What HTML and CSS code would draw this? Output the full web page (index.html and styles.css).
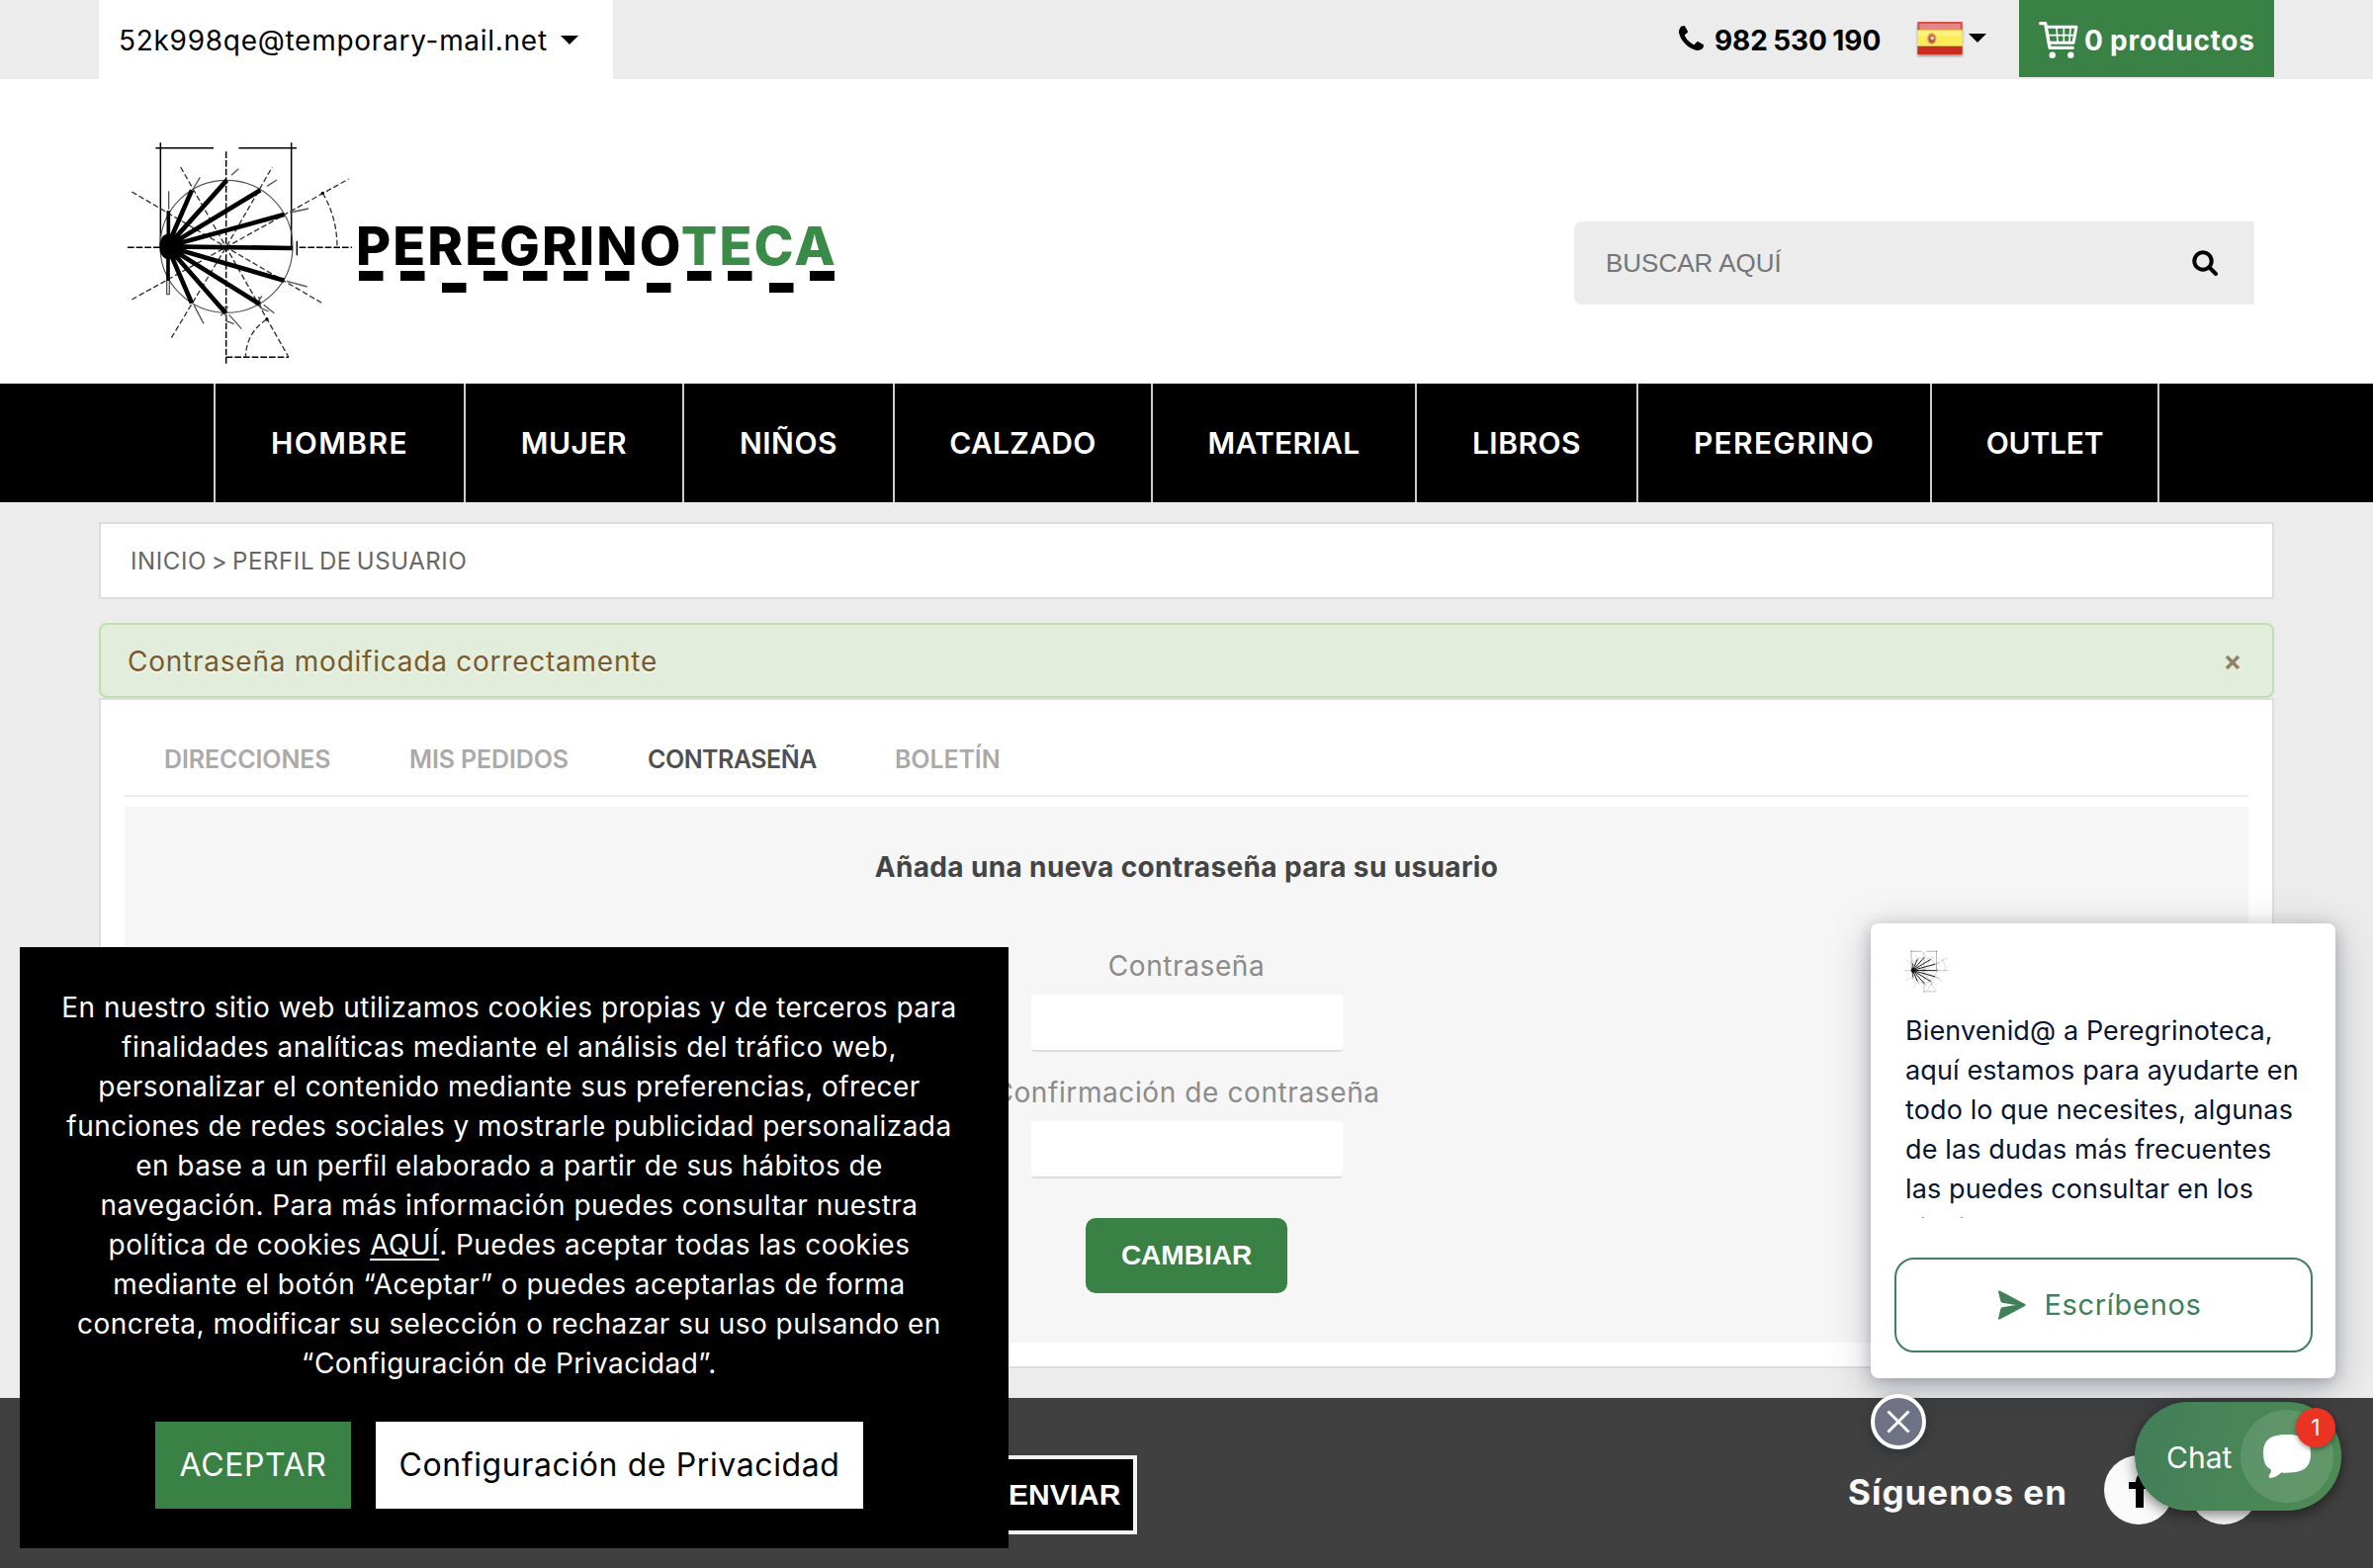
FILE: index.html
```html
<!DOCTYPE html>
<html lang="es">
<head>
<meta charset="utf-8">
<title>Peregrinoteca - Perfil de usuario</title>
<link rel="stylesheet" href="styles.css">
</head>
<body>
<svg class="defs" width="0" height="0" aria-hidden="true">
  <symbol id="shell" viewBox="0 0 750 720">
    <g fill="none" stroke="#000">
      <g stroke-width="4.500">
        <path d="M112 44H288M364 44H540M127 28V345M524 28V345M541 326V370"/>
        <circle cx="327" cy="343" r="201" stroke="#555" stroke-width="3.500"/>
      </g>
      <g stroke-width="4.500" stroke-dasharray="20 6">
        <path d="M326 55V698M27 346H130M548 346H708M326 679H516"/>
      </g>
      <g stroke="#333" stroke-width="4" stroke-dasharray="17 8">
        <path d="M40 177L326 345L616 514M40 504L326 345L698 138M188 102L326 345L516 679M160 620L326 345L466 102"/>
        <path d="M619 181Q663 255 663 346M449 564Q388 604 385 679"/>
      </g>
      <g stroke="#555" stroke-width="4">
        <path d="M226 168L247 133M342 127L364 107M450 160L480 141M520 240L576 228M152 230V175M510 448L572 465M440 520L472 545M335 550L373 593M228 520L258 577M146 445V488H154V445M425 495L432 530L455 540M320 525L328 570L350 578M415 520L435 493M310 553L332 525"/>
      </g>
      <g stroke-width="14">
        <path d="M148 343L222 172M148 343L328 142M148 343L430 172M148 343L502 246M148 343L528 348M148 343L502 446M148 343L428 518M148 343L325 545M148 343L222 515"/>
        <path d="M151 343V235M150 343V447" stroke-width="11"/>
      </g>
    </g>
    <ellipse cx="148" cy="343" rx="24" ry="38"/>
    <circle cx="619" cy="181" r="5"/><circle cx="450" cy="564" r="5"/>
  </symbol>
</svg>

<header class="topbar">
  <div class="account"><span class="t-mail">52k998qe@temporary-mail.net</span><i class="caret"></i></div>
  <div class="top-right">
    <svg class="phone" viewBox="192 128 1408 1408"><path d="M1600 1240q0 27-10 70.5t-21 68.5q-21 50-122 106-94 51-186 51-27 0-53-3.500t-57.500-12.500-47-14.500-55.500-20.500-49-18q-98-35-175-83-127-79-264-216t-216-264q-48-77-83-175-3-9-18-49t-20.500-55.500-14.500-47-12.500-57.500-3.500-53q0-92 51-186 56-101 106-122 25-11 68.500-21t70.500-10q14 0 21 3 18 6 53 76 11 19 30 54t35 63.500 31 53.500q3 4 17.500 25t21.500 35.500 7 28.500q0 20-28.500 50t-62 55-62 53-28.500 46q0 9 5 22.500t8.500 20.500 14 24 11.500 19q76 137 174 235t235 174q2 1 19 11.500t24 14 20.500 8.500 22.500 5q18 0 46-28.500t53-62 55-62 50-28.500q14 0 28.500 7t35.500 21.500 25 17.500q25 15 53.500 31t63.500 35 54 30q70 35 76 53 3 7 3 21z"/></svg>
    <span class="t-phone">982 530 190</span>
    <div class="lang">
      <svg class="flag" viewBox="0 0 44 32"><path fill="#d8504c" d="M0 0h44v9H0z"/><path fill="#e58586" d="M2 2h40v6H2z"/><path fill="#fcec5a" d="M0 8h44v16H0z"/><path fill="#faf27c" d="M1 9h42v5H1z"/><path fill="#cb2c20" d="M0 24h44v8H0z"/><ellipse cx="14" cy="16.500" rx="4.500" ry="5.500" fill="#dc9a4c"/><ellipse cx="14" cy="17" rx="3" ry="4" fill="#b8564a"/><circle cx="14.500" cy="16" r="1.800" fill="#e3d3dc"/></svg>
      <i class="caret"></i>
    </div>
    <div class="cart">
      <svg class="cart-icon" viewBox="0 0 120 114"><g fill="none" stroke="#fff" stroke-linecap="round" stroke-linejoin="round"><path stroke-width="10" d="M5 8h15l13 74h70"/><path stroke-width="9" d="M24 19h90l-9 48H33"/><path stroke-width="5" d="M30 44h80M54 22l3 42M76 22v42M96 22l-3 42"/></g><circle cx="41" cy="104" r="9.500" fill="#fff"/><circle cx="97" cy="104" r="9.500" fill="#fff"/></svg>
      <span class="t-cart">0 productos</span>
    </div>
  </div>
</header>

<section class="masthead">
  <div class="logo">
    <svg class="logo-shell"><use href="#shell"/></svg>
    <div class="wordmark">
      <div class="word">PEREGRINO<b>TECA</b></div>
      <svg class="steps" viewBox="0 0 482 22"><path d="M0 0h24.500v10H0zM42 0h24.500v10H42zM84 12h24.500v10H84zM126 0h24.500v10H126zM166 0h24.500v10H166zM207 0h24.500v10H207zM249 0h24.500v10H249zM291 12h24.500v10H291zM332 0h24.500v10H332zM373 0h24.500v10H373zM415 12h24.500v10H415zM456 0h25v10H456z"/></svg>
    </div>
  </div>
  <div class="search">
    <span>BUSCAR AQUÍ</span>
    <svg class="lens" viewBox="0 0 26 26"><g fill="none" stroke="#000" stroke-width="4"><circle cx="11" cy="11" r="8.700"/><path d="M17.500 17.500l6.500 6.500" stroke-linecap="round"/></g></svg>
  </div>
</section>

<nav class="nav">
  <a class="n1">HOMBRE</a><a class="n2">MUJER</a><a class="n2">NIÑOS</a><a class="n3">CALZADO</a><a class="n3">MATERIAL</a><a class="n2">LIBROS</a><a class="n4">PEREGRINO</a><a class="n5">OUTLET</a>
</nav>

<main class="main">
  <div class="crumbs">INICIO &gt; PERFIL DE USUARIO</div>
  <div class="alert"><span>Contraseña modificada correctamente</span>
    <svg class="alert-x" viewBox="0 0 16 16"><path d="M2 2l12 12M14 2L2 14" stroke="#8f8468" stroke-width="3.600" fill="none"/></svg>
  </div>
  <div class="panel">
    <div class="tabs"><a>DIRECCIONES</a><a>MIS PEDIDOS</a><a class="on">CONTRASEÑA</a><a>BOLETÍN</a></div>
    <form class="form">
      <h1>Añada una nueva contraseña para su usuario</h1>
      <label>Contraseña</label><div class="field"></div>
      <label>Confirmación de contraseña</label><div class="field"></div>
      <div class="change">CAMBIAR</div>
    </form>
  </div>
</main>

<footer class="footer">
  <div class="send">ENVIAR</div>
  <div class="follow"><span>Síguenos en</span>
    <svg class="social" viewBox="0 0 70 70"><circle cx="35" cy="35" r="35" fill="#fafafa"/><path d="M45 18h-4q-9 0-9 9H25v7h7v19h8V34h6v-7h-6q0-3 3-3h2z"/></svg>
    <svg class="social" viewBox="0 0 70 70"><circle cx="35" cy="35" r="35" fill="#fafafa"/></svg>
  </div>
</footer>

<aside class="cookies">
  <p>En nuestro sitio web utilizamos cookies propias y de terceros para<br>finalidades analíticas mediante el análisis del tráfico web,<br>personalizar el contenido mediante sus preferencias, ofrecer<br>funciones de redes sociales y mostrarle publicidad personalizada<br>en base a un perfil elaborado a partir de sus hábitos de<br>navegación. Para más información puedes consultar nuestra<br>política de cookies <u>AQUÍ</u>. Puedes aceptar todas las cookies<br>mediante el botón “Aceptar” o puedes aceptarlas de forma<br>concreta, modificar su selección o rechazar su uso pulsando en<br>“Configuración de Privacidad”.</p>
  <div class="cookie-actions"><div class="accept">ACEPTAR</div><div class="config">Configuración de Privacidad</div></div>
</aside>

<aside class="chat-card">
  <svg class="mini-shell" viewBox="0 0 750 720"><use href="#shell" width="750" height="720"/></svg>
  <p>Bienvenid@ a Peregrinoteca,<br>aquí estamos para ayudarte en<br>todo lo que necesites, algunas<br>de las dudas más frecuentes<br>las puedes consultar en los<br>siguientes enlaces</p>
  <div class="write">
    <svg viewBox="0 0 28 30"><path fill="#40805a" d="M0 1.500Q0 0 1.500.500L27 14q1.500 1 0 2L1.500 29.500Q0 30 0 28.500L2.500 18.500q.3-1 1.500-1.300L18 15 4 12.800q-1.200-.3-1.500-1.300z"/></svg>
    <span>Escríbenos</span>
  </div>
</aside>
<div class="close"><svg viewBox="0 0 24 24"><path d="M1.500 1.500l21 21M22.500 1.500l-21 21" stroke="#fff" stroke-width="3" fill="none"/></svg></div>
<div class="pill">
  <span>Chat</span>
  <div class="bubble"><svg viewBox="0 0 144 132"><path fill="#fff" d="M72 0C125 0 144 18 144 58S125 116 72 116q-10 0-18-.8Q42 128 24 132q-10 0-6-9 7-8 6-16Q0 97 0 58C0 18 19 0 72 0z"/></svg></div>
  <div class="badge">1</div>
</div>
</body>
</html>
```
FILE: styles.css
```css
* { box-sizing: border-box; }
body {
  margin: 0;
  width: 2400px;
  height: 1586px;
  overflow: hidden;
  position: relative;
  display: flex;
  flex-direction: column;
  background: #ececec;
  font-family: Inter, "Open Sans", sans-serif;
  font-size: 28px;
  line-height: 40px;
  color: #000;
}
svg { display: block; flex: none; }
.defs { position: absolute; }
span, a, .crumbs { white-space: nowrap; }

/* top bar */
.topbar { height: 80px; flex: none; padding: 0 100px; display: flex; justify-content: space-between; }
.account { width: 520px; background: #fff; padding-left: 20px; display: flex; align-items: center; gap: 13px; }
.t-mail { letter-spacing: .72px; padding-top: 1px; }
.caret { width: 0; height: 0; border: 9px solid transparent; border-top: 9px solid #000; border-bottom: 0; }
.top-right { display: flex; align-items: center; }
.phone { width: 25px; height: 25px; margin: -3px 11px 0 0; }
.t-phone { width: 205px; font-weight: 700; letter-spacing: -.1px; word-spacing: -1px; padding-top: 1px; }
.lang { width: 103px; display: flex; align-items: center; gap: 6px; margin-top: -3px; }
.flag { width: 46px; height: 33px; filter: drop-shadow(0 2px 1px rgba(0,0,0,.35)); }
.cart { width: 258px; height: 78px; align-self: flex-start; background: #3a8146; color: #fff; display: flex; align-items: center; padding: 2px 0 0 20px; gap: 6px; }
.cart-icon { width: 40px; height: 38px; }
.t-cart { font-weight: 700; letter-spacing: .75px; word-spacing: -1px; padding-top: 1px; }

/* logo and search */
.masthead { height: 308px; flex: none; background: #fff; padding: 0 120px; display: flex; justify-content: space-between; }
.logo { display: flex; padding-top: 55px; }
.logo-shell { width: 250px; height: 240px; }
.wordmark { margin-left: -10px; padding-top: 84px; }
.word { font-size: 54px; line-height: 60px; font-weight: 800; letter-spacing: 2.1px; white-space: nowrap; }
.word b { font-weight: 800; color: #3a8a48; }
.steps { width: 482px; height: 22px; margin: -5px 0 0 3px; }
.search { width: 688px; height: 84px; margin-top: 144px; background: #ececec; border-radius: 8px 0 0 8px; display: flex; align-items: center; justify-content: space-between; padding: 0 37px 0 32px; font: 26px "Liberation Sans", Arial, sans-serif; color: #757575; }
.lens { width: 26px; height: 26px; }

/* main navigation */
.nav { height: 120px; flex: none; background: #000; display: grid; grid-template-columns: 253px 221px 213px 261px 267px 224px 297px 232px; padding-left: 216px; }
.nav a { border-left: 2px solid #ccc; color: #fff; font-size: 30px; line-height: 120px; font-weight: 600; text-align: center; }
.nav a:last-child { border-right: 2px solid #ccc; }
.n1 { letter-spacing: 1.4px; }
.n2 { letter-spacing: .5px; }
.n3 { letter-spacing: .3px; }
.n4 { letter-spacing: 1.3px; }
.n5 { letter-spacing: -.2px; }

/* content */
.main { padding: 20px 100px 0; height: 906px; flex: none; }
.crumbs { height: 78px; border: 2px solid #ddd; background: #fff; padding-left: 30px; font-size: 24px; line-height: 75px; letter-spacing: .6px; word-spacing: -2.5px; color: #666; }
.alert { height: 76px; margin-top: 24px; border: 2px solid #bfdfaf; border-radius: 8px; background: #e2eedb; color: #795a2c; display: flex; align-items: center; justify-content: space-between; padding: 0 32px 0 27px; letter-spacing: .76px; text-shadow: 0 2px 0 rgba(255,255,255,.5); }
.alert span { padding-top: 1px; }
.alert-x { width: 16px; height: 16px; margin-top: 3px; }
.panel { height: 678px; border: 2px solid #ddd; background: #fff; padding: 0 24px; }
.tabs { height: 98px; border-bottom: 2px solid #ececec; display: grid; grid-template-columns: 248px 241px 250px 150px; padding: 40px 0 0 40px; font-size: 25px; font-weight: 600; letter-spacing: -.12px; color: #aaa; }
.tabs .on { color: #505050; letter-spacing: -.5px; }
.form { margin-top: 10px; height: 542px; background: #f6f6f6; display: flex; flex-direction: column; align-items: center; padding-top: 41px; }
.form h1 { margin: 0 0 60px; font-size: 28px; line-height: 40px; font-weight: 700; letter-spacing: .36px; color: #444; }
.form label { color: #8b8b8b; letter-spacing: .6px; }
.field { width: 315px; height: 58px; margin: 9px 0 21px; background: #fff; border-radius: 4px; border-bottom: 2px solid #ddd; }
.change { width: 204px; height: 76px; margin-top: 19px; border-radius: 10px; background: #3a8146; color: #fff; font: bold 28px/75px "Liberation Sans", Arial, sans-serif; text-align: center; }

/* footer */
.footer { flex: 1; background: #404040; padding: 58px 116px 0 1000px; display: flex; justify-content: space-between; }
.send { width: 150px; height: 80px; border: 4px solid #f4f4f4; background: #000; color: #fff; padding-left: 16px; font: bold 30px/71px "Liberation Sans", Arial, sans-serif; }
.follow { display: flex; align-items: center; height: 70px; color: #fafafa; font-size: 35px; font-weight: 700; letter-spacing: 1px; }
.follow span { width: 259px; padding-top: 3px; }
.social { width: 70px; height: 70px; }
.social + .social { margin-left: 16px; }

/* cookie notice */
.cookies { position: absolute; left: 20px; top: 958px; width: 1000px; height: 608px; background: #000; color: #fff; padding: 41px 10px 0 0; text-align: center; letter-spacing: .46px; }
.cookies p { margin: 0 0 39px; white-space: nowrap; }
.cookies u { text-decoration-thickness: 2px; text-underline-offset: 4px; }
.cookie-actions { display: flex; gap: 25px; padding-left: 137px; font-size: 32px; line-height: 87px; height: 88px; }
.accept { width: 198px; background: #3a8146; letter-spacing: .6px; }
.config { width: 493px; background: #fff; color: #000; letter-spacing: .6px; }

/* chat widget */
.chat-card { position: absolute; left: 1892px; top: 934px; width: 470px; height: 460px; background: #fff; border-radius: 8px; box-shadow: 0 10px 40px 4px rgba(6,19,43,.18), 0 4px 16px rgba(6,19,43,.24); padding: 25px 24px 0; }
.mini-shell { width: 48px; height: 47px; margin-left: 9px; }
.chat-card p { margin: 17px 0 0 11px; height: 209px; overflow: hidden; white-space: nowrap; font-size: 27px; letter-spacing: .12px; color: #081530; }
.write { width: 423px; height: 96px; margin-top: 40px; border: 2px solid #40805a; border-radius: 20px; display: flex; align-items: center; justify-content: center; gap: 18px; padding-right: 7px; color: #40805a; font-size: 29px; letter-spacing: .7px; }
.write svg { width: 28px; height: 30px; }
.close { position: absolute; left: 1892px; top: 1410px; width: 56px; height: 56px; border: 4px solid #fff; border-radius: 50%; background: #6f7184; display: flex; align-items: center; justify-content: center; box-shadow: 0 4px 12px rgba(6,19,43,.35); }
.close svg { width: 24px; height: 24px; }
.pill { position: absolute; left: 2159px; top: 1418px; width: 209px; height: 110px; border-radius: 55px; background: linear-gradient(100deg, #427f59, #4e8b54); box-shadow: 0 4px 14px rgba(0,0,0,.5); color: #fff; display: flex; align-items: center; justify-content: space-between; padding: 0 8px 0 32px; font-size: 30px; }
.pill span { padding-top: 1px; }
.bubble { width: 94px; height: 94px; border-radius: 50%; background: rgba(255,255,255,.12); display: flex; align-items: center; justify-content: center; }
.bubble svg { width: 48px; height: 44px; }
.badge { position: absolute; right: 6px; top: 6px; width: 40px; height: 40px; border-radius: 50%; background: #eb3323; text-align: center; font-size: 23px; box-shadow: 0 2px 5px rgba(0,0,0,.4); }
```
